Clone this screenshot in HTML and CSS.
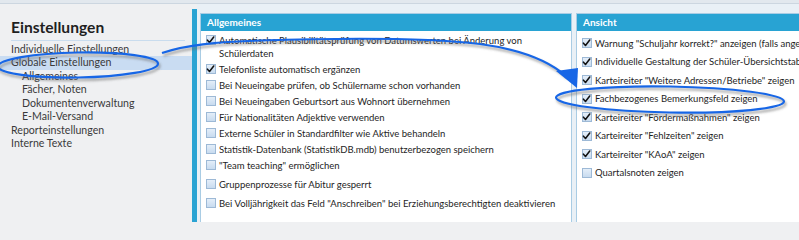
FILE: index.html
```html
<!DOCTYPE html>
<html lang="de">
<head>
<meta charset="utf-8">
<title>Einstellungen</title>
<link rel="stylesheet" href="styles.css">
</head>
<body>
<div class="topbar"></div>
<div class="main">
  <aside class="sidebar">
    <h1 class="title">Einstellungen</h1>
    <ul class="nav">
      <li>Individuelle Einstellungen</li>
      <li class="active">Globale Einstellungen</li>
      <li class="sub">Allgemeines</li>
      <li class="sub">Fächer, Noten</li>
      <li class="sub">Dokumentenverwaltung</li>
      <li class="sub">E-Mail-Versand</li>
      <li>Reporteinstellungen</li>
      <li>Interne Texte</li>
    </ul>
  </aside>
  <div class="accent"></div>
  <div class="content">
    <section class="group group-general">
      <header class="group-head">Allgemeines</header>
      <div class="group-body">
        <div class="row"><span class="cb"><svg viewBox="0 0 10 10"><path d="M1.6 5.2 L3.9 7.8 L8.6 1.6"/></svg></span><span class="lbl">Automatische Plausibilitätsprüfung von Datumswerten bei Änderung von<br>Schülerdaten</span></div>
        <div class="row"><span class="cb"><svg viewBox="0 0 10 10"><path d="M1.6 5.2 L3.9 7.8 L8.6 1.6"/></svg></span><span class="lbl">Telefonliste automatisch ergänzen</span></div>
        <div class="row"><span class="cb"></span><span class="lbl">Bei Neueingabe prüfen, ob Schülername schon vorhanden</span></div>
        <div class="row"><span class="cb"></span><span class="lbl">Bei Neueingaben Geburtsort aus Wohnort übernehmen</span></div>
        <div class="row"><span class="cb"></span><span class="lbl">Für Nationalitäten Adjektive verwenden</span></div>
        <div class="row"><span class="cb"></span><span class="lbl">Externe Schüler in Standardfilter wie Aktive behandeln</span></div>
        <div class="row"><span class="cb"></span><span class="lbl">Statistik-Datenbank (StatistikDB.mdb) benutzerbezogen speichern</span></div>
        <div class="row"><span class="cb"></span><span class="lbl">"Team teaching" ermöglichen</span></div>
        <div class="row row-wide"><span class="cb"></span><span class="lbl">Gruppenprozesse für Abitur gesperrt</span></div>
        <div class="row row-wide"><span class="cb"></span><span class="lbl">Bei Volljährigkeit das Feld "Anschreiben" bei Erziehungsberechtigten deaktivieren</span></div>
      </div>
    </section>
    <section class="group group-view">
      <header class="group-head">Ansicht</header>
      <div class="group-body view-body">
        <div class="row"><span class="cb"><svg viewBox="0 0 10 10"><path d="M1.6 5.2 L3.9 7.8 L8.6 1.6"/></svg></span><span class="lbl">Warnung "Schuljahr korrekt?" anzeigen (falls angegeben)</span></div>
        <div class="row"><span class="cb"><svg viewBox="0 0 10 10"><path d="M1.6 5.2 L3.9 7.8 L8.6 1.6"/></svg></span><span class="lbl">Individuelle Gestaltung der Schüler-Übersichtstabelle</span></div>
        <div class="row"><span class="cb"><svg viewBox="0 0 10 10"><path d="M1.6 5.2 L3.9 7.8 L8.6 1.6"/></svg></span><span class="lbl">Karteireiter "Weitere Adressen/Betriebe" zeigen</span></div>
        <div class="row"><span class="cb"><svg viewBox="0 0 10 10"><path d="M1.6 5.2 L3.9 7.8 L8.6 1.6"/></svg></span><span class="lbl">Fachbezogenes Bemerkungsfeld zeigen</span></div>
        <div class="row"><span class="cb"><svg viewBox="0 0 10 10"><path d="M1.6 5.2 L3.9 7.8 L8.6 1.6"/></svg></span><span class="lbl">Karteireiter "Fördermaßnahmen" zeigen</span></div>
        <div class="row"><span class="cb"><svg viewBox="0 0 10 10"><path d="M1.6 5.2 L3.9 7.8 L8.6 1.6"/></svg></span><span class="lbl">Karteireiter "Fehlzeiten" zeigen</span></div>
        <div class="row"><span class="cb"><svg viewBox="0 0 10 10"><path d="M1.6 5.2 L3.9 7.8 L8.6 1.6"/></svg></span><span class="lbl">Karteireiter "KAoA" zeigen</span></div>
        <div class="row"><span class="cb"></span><span class="lbl">Quartalsnoten zeigen</span></div>
      </div>
    </section>
  </div>
</div>
<svg class="annot" viewBox="0 0 799 222" width="799" height="222">
  <defs>
    <filter id="blur" x="-10%" y="-50%" width="120%" height="200%"><feGaussianBlur stdDeviation="1.2"/></filter>
  </defs>
  <g class="shadow" filter="url(#blur)" transform="translate(1.5 2.5)">
    <ellipse cx="78" cy="65" rx="80" ry="12.5" transform="rotate(-1 78 65)"/>
    <path d="M162 53 C185 45 215 42 260 40.5 C340 38 430 38 480 44 C525 50 550 62 566 76"/>
    <ellipse cx="670" cy="99.5" rx="114" ry="13" transform="rotate(1 670 99.5)"/>
  </g>
  <g class="ink">
    <ellipse cx="78" cy="65" rx="80" ry="12.5" transform="rotate(-1 78 65)"/>
    <path d="M162 53 C185 45 215 42 260 40.5 C340 38 430 38 480 44 C525 50 550 62 566 76"/>
    <ellipse cx="670" cy="99.5" rx="114" ry="13" transform="rotate(1 670 99.5)"/>
  </g>
  <polygon class="head" points="556,71 578,68 577,88"/>
</svg>
</body>
</html>
```

FILE: styles.css
```css
* { box-sizing: border-box; }

html, body {
  margin: 0;
  padding: 0;
}

body {
  width: 799px;
  height: 222px;
  overflow: hidden;
  position: relative;
  background: #eff0f2;
  font-family: Lato, "Open Sans", sans-serif;
  color: #222;
}

.topbar {
  height: 4px;
  background: #e2e8ee;
  border-bottom: 1px solid #ccd6e0;
}

.main {
  display: flex;
  height: 218px;
}

.sidebar {
  width: 192px;
  flex: none;
  padding-top: 14px;
  background: #eff0f2;
}

.title {
  margin: 0 7px 0 11px;
  padding-bottom: 4px;
  border-bottom: 1px solid #c9dcee;
  font-size: 15.6px;
  line-height: 18px;
  font-weight: 700;
  color: #1f1f1f;
}

.nav {
  list-style: none;
  margin: 1.5px 0 0;
  padding: 0;
  font-size: 10.6px;
  line-height: 13.5px;
  color: #3a3a3a;
}

.nav li {
  padding-left: 11px;
  white-space: nowrap;
}

.nav li.sub {
  padding-left: 22px;
}

.nav li.active {
  background: #c9dcf2;
}

.accent {
  width: 5px;
  flex: none;
  margin-top: 5px;
  background: #2aa3d3;
}

.content {
  flex: 1;
  display: flex;
  gap: 4px;
  padding: 9px 0 0 3px;
  background: #e9f0f6;
  overflow: hidden;
}

.group {
  flex: none;
  background: #fff;
  border: 1px solid #a9cce4;
  border-bottom: none;
}

.group-general {
  width: 372px;
}

.group-view {
  width: 320px;
}

.group-head {
  height: 17px;
  line-height: 17px;
  padding-left: 6px;
  background: #28a3d3;
  color: #fff;
  font-weight: 700;
  font-size: 10px;
}

.group-body {
  padding: 2.5px 0 0 5px;
  font-size: 9.5px;
  line-height: 13px;
}

.view-body {
  padding-top: 5.5px;
}

.row {
  display: flex;
  align-items: flex-start;
  gap: 3px;
  white-space: nowrap;
}

.row + .row {
  margin-top: 3px;
}

.row + .row-wide {
  margin-top: 6px;
}

.view-body .row + .row {
  margin-top: 5.5px;
}

.cb {
  flex: none;
  width: 10px;
  height: 10px;
  margin-top: 1.5px;
  border: 1px solid #9db9d6;
  background: linear-gradient(#e4eef9, #c8dbef);
  display: flex;
}

.cb svg {
  width: 10px;
  height: 10px;
  margin: -1px 0 0 -1px;
  fill: none;
  stroke: #111;
  stroke-width: 1.7;
  stroke-linecap: round;
  stroke-linejoin: round;
}

.lbl {
  color: #1e1e1e;
}

.annot {
  position: absolute;
  top: 0;
  left: 0;
  pointer-events: none;
}

.annot .shadow {
  fill: none;
  stroke: #6d6d6d;
  stroke-opacity: 0.6;
  stroke-width: 2.2;
}

.annot .ink {
  fill: none;
  stroke: #1766e6;
  stroke-width: 2.2;
}

.annot .head {
  fill: #1766e6;
}
```
